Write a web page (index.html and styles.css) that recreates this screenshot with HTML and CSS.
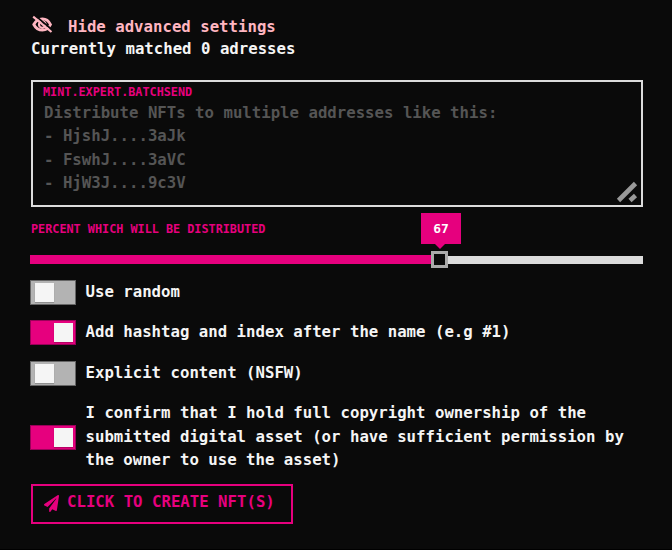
FILE: index.html
```html
<!DOCTYPE html>
<html lang="en">
<head>
<meta charset="utf-8">
<title>Create NFT</title>
<link rel="stylesheet" href="styles.css">
</head>
<body>
<main class="form">
  <div class="advanced">
    <svg class="eye" viewBox="0 0 20 17" fill="none" stroke="currentColor"><path d="M1.800 8.500C4 4.200 7 2.800 10.500 2.800s6 1.600 8 5.700C16.500 12.800 14 14.200 10.500 14.200S4 12.800 1.800 8.500Z" stroke-width="2.800"/><circle cx="10.300" cy="8.500" r="3.300" stroke-width="2.200"/><path d="M3-.6 20.500 14.200" stroke="#0a0a0a" stroke-width="1.800"/><path d="M1.200.7 19.500 16" stroke-width="2.200"/></svg>
    <span>Hide advanced settings</span>
  </div>
  <div class="matched">Currently matched 0 adresses</div>
  <div class="textarea">
    <div class="label">MINT.EXPERT.BATCHSEND</div>
    <div class="placeholder">Distribute NFTs to multiple addresses like this:<br>- HjshJ....3aJk<br>- FswhJ....3aVC<br>- HjW3J....9c3V</div>
    <svg class="grip" viewBox="0 0 22 22" stroke="#999" stroke-width="4.600"><path d="M2.500 19.500 19.500 2.500M14 19.500 19.500 14.500"/></svg>
  </div>
  <div class="label percent">PERCENT WHICH WILL BE DISTRIBUTED</div>
  <div class="slider">
    <div class="fill"></div>
    <div class="thumb"><div class="tip">67</div></div>
  </div>
  <div class="options">
    <div class="option"><i class="toggle"></i><span>Use random</span></div>
    <div class="option"><i class="toggle on"></i><span>Add hashtag and index after the name (e.g #1)</span></div>
    <div class="option"><i class="toggle"></i><span>Explicit content (NSFW)</span></div>
    <div class="option"><i class="toggle on"></i><span>I confirm that I hold full copyright ownership of the<br>submitted digital asset (or have sufficient permission by<br>the owner to use the asset)</span></div>
  </div>
  <button class="create"><svg class="plane" viewBox="0 0 512 512" preserveAspectRatio="none" fill="currentColor"><path d="M476 3.200 12.500 270.600c-18.100 10.400-15.800 35.600 2.200 43.200L121 358.400l287.300-253.200c5.500-4.900 13.300 2.600 8.600 8.300L176 407v80.500c0 23.600 28.500 32.900 42.500 15.800L282 426l124.600 52.200c14.200 6 30.400-2.900 33-18.200l72-432C515 7.800 493.300-6.800 476 3.200z"/></svg><span>CLICK TO CREATE NFT(S)</span></button>
</main>
</body>
</html>
```
FILE: styles.css
```css
* { box-sizing: border-box; }

body {
  margin: 0;
  height: 550px;
  overflow: hidden;
  background: #0a0a0a;
  border-bottom: 1px solid #000;
  color: #f5f5f5;
  font: bold 15.7px/23.6px "DejaVu Sans Mono", monospace;
  white-space: nowrap;
}

.form { padding: 16px 29px 0 31px; }

.advanced {
  display: flex;
  height: 22px;
  line-height: 22px;
  color: #ffb6c1;
}

.eye { width: 20px; height: 17px; margin: 0 15px 0 1px; overflow: visible; }

.advanced span { margin-left: 1px; }

.matched { height: 22px; line-height: 22px; }

.textarea {
  position: relative;
  height: 127px;
  margin-top: 20px;
  padding: 3px 11px;
  border: 2px solid #dcdcdc;
}

.label {
  height: 15px;
  color: #e6007e;
  font-size: 11.8px;
  line-height: 15px;
}

.textarea .label { margin-left: -1px; }

.placeholder { padding-top: .6px; color: #555; }

.grip { position: absolute; right: 3px; bottom: 2px; width: 22px; height: 22px; }

.percent { margin-top: 15px; }

.slider {
  position: relative;
  height: 8px;
  margin: 19px 0 0 -1px;
  background: #dcdcdc;
}

.fill { width: 67%; height: 9px; margin-top: -1px; background: #e6007e; position: absolute; }

.thumb {
  position: absolute;
  left: 401px;
  top: -5px;
  width: 17px;
  height: 17px;
  background: #0a0a0a;
  border: 3px solid #aaa;
}

.tip {
  position: absolute;
  left: -13px;
  top: -41px;
  width: 40px;
  height: 31px;
  background: #e6007e;
  color: #fff;
  font-size: 13px;
  line-height: 31px;
  text-align: center;
}

.tip::after {
  content: "";
  position: absolute;
  left: 14px;
  top: 31px;
  border: 5px solid transparent;
  border-top-color: #e6007e;
  border-bottom: 0;
}

.options {
  display: grid;
  gap: 16.6px;
  margin-top: 16.5px;
}

.option { display: flex; align-items: center; gap: 10px; }

.option span { margin: -1px 0 1px -.5px; }

.toggle {
  display: flex;
  align-items: center;
  width: 46px;
  height: 25px;
  margin: -1px 0 0 -1px;
  padding: 0 3px 0 4px;
  background: #b3b3b3;
  border: 1px solid #666;
}

.toggle::before {
  content: "";
  width: 19px;
  height: 19px;
  background: #f5f5f5;
  box-shadow: 0 1px 1px #0003;
}

.toggle.on {
  justify-content: flex-end;
  padding-right: 2px;
  background: #e6007e;
  border-color: #9a0059;
}

.create {
  display: flex;
  width: 262px;
  height: 40px;
  margin-top: 11px;
  padding: 4px 10px;
  background: transparent;
  border: 2px solid #e6007e;
  color: #e6007e;
  font: inherit;
}

.plane { flex: none; width: 15px; height: 17px; margin: 5px 8px 0 1px; }
```
